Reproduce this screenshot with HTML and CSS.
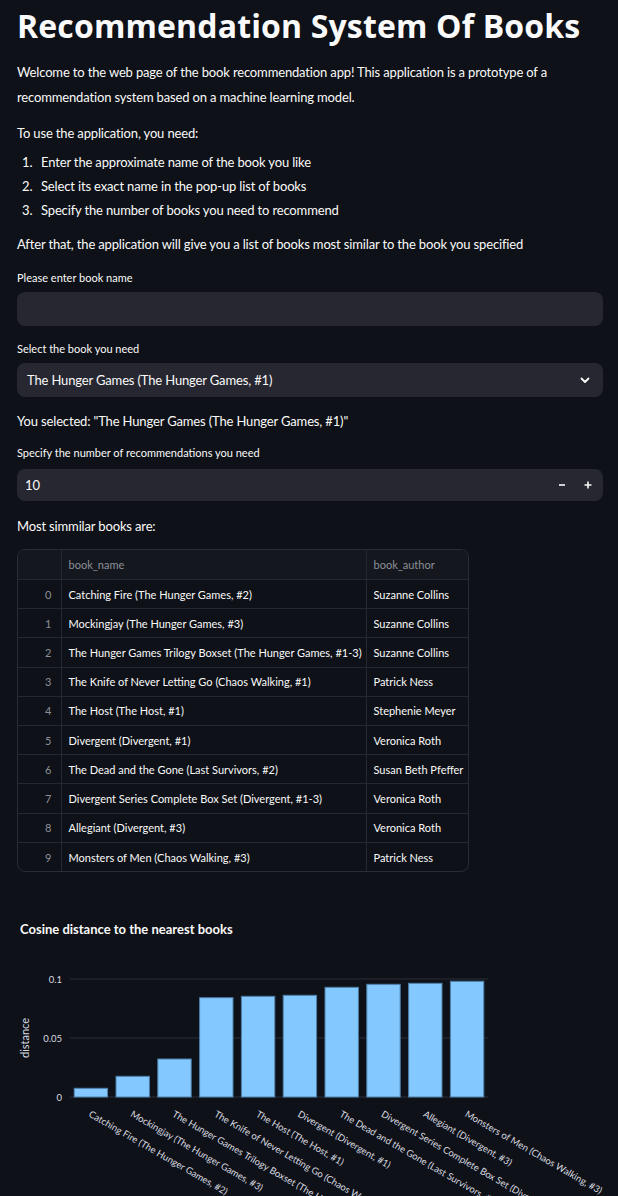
FILE: index.html
```html
<!DOCTYPE html>
<html lang="en">
<head>
<meta charset="utf-8">
<title>Recommendation System Of Books</title>
<link rel="stylesheet" href="styles.css">
</head>
<body>
<main class="page">
  <h1 class="title">Recommendation System Of Books</h1>
  <p class="text intro">Welcome to the web page of the book recommendation app! This application is a prototype of a recommendation system based on a machine learning model.</p>
  <p class="text need">To use the application, you need:</p>
  <ol class="steps">
    <li>Enter the approximate name of the book you like</li>
    <li>Select its exact name in the pop-up list of books</li>
    <li>Specify the number of books you need to recommend</li>
  </ol>
  <p class="text after">After that, the application will give you a list of books most similar to the book you specified</p>

  <label class="label first">Please enter book name</label>
  <div class="field input"></div>

  <label class="label second">Select the book you need</label>
  <div class="field select">
    <span>The Hunger Games (The Hunger Games, #1)</span>
    <svg class="chev" width="10" height="7" viewBox="0 0 10 7"><path d="M1.5 1.5 L5 5 L8.5 1.5" fill="none" stroke="#fafafa" stroke-width="1.8" stroke-linecap="round" stroke-linejoin="round"/></svg>
  </div>

  <p class="text selected">You selected: "The Hunger Games (The Hunger Games, #1)"</p>

  <label class="label third">Specify the number of recommendations you need</label>
  <div class="field number">
    <span>10</span>
    <div class="steppers">
      <svg width="10" height="10" viewBox="0 0 10 10"><path d="M2 5 H8" stroke="#fafafa" stroke-width="1.6"/></svg>
      <svg width="10" height="10" viewBox="0 0 10 10"><path d="M1.5 5 H8.5 M5 1.5 V8.5" stroke="#fafafa" stroke-width="1.6"/></svg>
    </div>
  </div>

  <p class="text most">Most simmilar books are:</p>

  <div class="table-wrap">
    <table class="df">
      <thead>
        <tr><th class="idx"></th><th class="name">book_name</th><th class="author">book_author</th></tr>
      </thead>
      <tbody>
        <tr><td class="idx">0</td><td>Catching Fire (The Hunger Games, #2)</td><td>Suzanne Collins</td></tr>
        <tr><td class="idx">1</td><td>Mockingjay (The Hunger Games, #3)</td><td>Suzanne Collins</td></tr>
        <tr><td class="idx">2</td><td>The Hunger Games Trilogy Boxset (The Hunger Games, #1-3)</td><td>Suzanne Collins</td></tr>
        <tr><td class="idx">3</td><td>The Knife of Never Letting Go (Chaos Walking, #1)</td><td>Patrick Ness</td></tr>
        <tr><td class="idx">4</td><td>The Host (The Host, #1)</td><td>Stephenie Meyer</td></tr>
        <tr><td class="idx">5</td><td>Divergent (Divergent, #1)</td><td>Veronica Roth</td></tr>
        <tr><td class="idx">6</td><td>The Dead and the Gone (Last Survivors, #2)</td><td>Susan Beth Pfeffer</td></tr>
        <tr><td class="idx">7</td><td>Divergent Series Complete Box Set (Divergent, #1-3)</td><td>Veronica Roth</td></tr>
        <tr><td class="idx">8</td><td>Allegiant (Divergent, #3)</td><td>Veronica Roth</td></tr>
        <tr><td class="idx">9</td><td>Monsters of Men (Chaos Walking, #3)</td><td>Patrick Ness</td></tr>
      </tbody>
    </table>
  </div>

  <div class="chart">
    <svg width="586" height="300" viewBox="0 0 586 300" class="chart-svg">
      <text class="chart-title" x="3" y="34.5">Cosine distance to the nearest books</text>
      <g class="grid">
        <line x1="53" y1="80" x2="471" y2="80"/>
        <line x1="53" y1="139" x2="471" y2="139"/>
        <line x1="53" y1="198" x2="471" y2="198"/>
      </g>
      <g class="ytick">
        <text x="45" y="83.5">0.1</text>
        <text x="45" y="142.5">0.05</text>
        <text x="45" y="201.5">0</text>
      </g>
      <text class="ytitle" transform="translate(12 139) rotate(-90)">distance</text>
      <g class="bars">
        <rect x="57.2" y="189.3" width="33.4" height="8.7"/>
        <rect x="99.0" y="177.3" width="33.4" height="20.7"/>
        <rect x="140.8" y="160" width="33.4" height="38"/>
        <rect x="182.6" y="98.7" width="33.4" height="99.3"/>
        <rect x="224.4" y="97.3" width="33.4" height="100.7"/>
        <rect x="266.2" y="96.3" width="33.4" height="101.7"/>
        <rect x="308.0" y="88.3" width="33.4" height="109.7"/>
        <rect x="349.8" y="85.3" width="33.4" height="112.7"/>
        <rect x="391.6" y="84.3" width="33.4" height="113.7"/>
        <rect x="433.4" y="82.3" width="33.4" height="115.7"/>
      </g>
      <g class="xtick">
        <text transform="translate(71 217) rotate(30)">Catching Fire (The Hunger Games, #2)</text>
        <text transform="translate(112.8 217) rotate(30)">Mockingjay (The Hunger Games, #3)</text>
        <text transform="translate(154.6 217) rotate(30)">The Hunger Games Trilogy Boxset (The Hunger Games, #1-3)</text>
        <text transform="translate(196.4 217) rotate(30)">The Knife of Never Letting Go (Chaos Walking, #1)</text>
        <text transform="translate(238.2 217) rotate(30)">The Host (The Host, #1)</text>
        <text transform="translate(280 217) rotate(30)">Divergent (Divergent, #1)</text>
        <text transform="translate(321.8 217) rotate(30)">The Dead and the Gone (Last Survivors, #2)</text>
        <text transform="translate(363.6 217) rotate(30)">Divergent Series Complete Box Set (Divergent, #1-3)</text>
        <text transform="translate(405.4 217) rotate(30)">Allegiant (Divergent, #3)</text>
        <text transform="translate(447.2 217) rotate(30)">Monsters of Men (Chaos Walking, #3)</text>
      </g>
    </svg>
  </div>
</main>
</body>
</html>
```
FILE: styles.css
```css
*, *::before, *::after { box-sizing: border-box; }
html, body {
  margin: 0;
  padding: 0;
  background: #0e1117;
}
body {
  color: #fafafa;
  font-family: Lato, "Liberation Sans", sans-serif;
  font-size: 13px;
}
.page {
  padding: 8px 15px 0 17px;
  display: flex;
  flex-direction: column;
}
.title {
  margin: 0;
  font-family: "Open Sans", Lato, sans-serif;
  font-size: 32px;
  line-height: 36px;
  font-weight: 700;
  letter-spacing: 0.15px;
}
.text {
  margin: 0;
  font-size: 13px;
  letter-spacing: -0.15px;
  line-height: 25px;
}
.intro { margin-top: 15.5px; }
.need { margin-top: 11px; }
.steps {
  margin: 4.5px 0 0;
  padding: 0;
  list-style: none;
  counter-reset: step;
  font-size: 13px;
  letter-spacing: -0.15px;
  line-height: 24px;
}
.steps li {
  display: flex;
  counter-increment: step;
}
.steps li::before {
  content: counter(step) ".";
  width: 24px;
  padding-left: 5px;
  flex: none;
}
.after { margin-top: 9.5px; }
.label {
  display: block;
  font-size: 11px;
  line-height: 20px;
  margin-top: 11px;
}
.label.first { margin-top: 11.5px; }
.label.second { margin-top: 13px; }
.label.third { margin-top: 9.5px; }
.field {
  background: #262730;
  border-radius: 8px;
  height: 34px;
  margin-top: 4px;
  display: flex;
  align-items: center;
  justify-content: space-between;
  font-size: 13px;
  letter-spacing: -0.15px;
}
.select { padding: 0 13px 0 10px; }
.number {
  height: 32px;
  margin-top: 6px;
  padding: 0 10px 0 8px;
}
.steppers {
  display: flex;
  gap: 16px;
}
.selected { margin-top: 11.5px; }
.most { margin-top: 12.5px; }
.table-wrap {
  margin-top: 10px;
  width: 452px;
  border: 1px solid #2a2c34;
  border-radius: 8px;
  overflow: hidden;
}
.df {
  width: 100%;
  border-collapse: collapse;
  table-layout: fixed;
  font-size: 11px;
}
.df th, .df td {
  height: 29.2px;
  padding: 0 7px;
  text-align: left;
  white-space: nowrap;
  overflow: hidden;
  border-right: 1px solid #26282f;
  border-bottom: 1px solid #26282f;
}
.df th:last-child, .df td:last-child { border-right: none; }
.df tbody tr:last-child td { border-bottom: none; }
.df th {
  height: 30px;
  background: #15171e;
  color: #8d9098;
  font-weight: 400;
}
.df .idx {
  width: 43px;
  text-align: right;
  color: #8d9098;
  padding-right: 9px;
}
.df .name { width: 305px; }
.chart { margin-top: 27px; }
.chart-svg { display: block; overflow: visible; }
.chart-title {
  fill: #fafafa;
  font-size: 13px;
  font-weight: 700;
}
.grid line { stroke: #2b2e38; stroke-width: 1; }
.ytick text {
  fill: #d8dae0;
  font-size: 9.5px;
  text-anchor: end;
}
.ytitle {
  fill: #d8dae0;
  font-size: 11px;
  text-anchor: middle;
}
.bars rect {
  fill: #83c9ff;
  stroke: #4d7ea8;
  stroke-width: 1;
}
.xtick text {
  fill: #d8dae0;
  font-size: 9.5px;
}
```
